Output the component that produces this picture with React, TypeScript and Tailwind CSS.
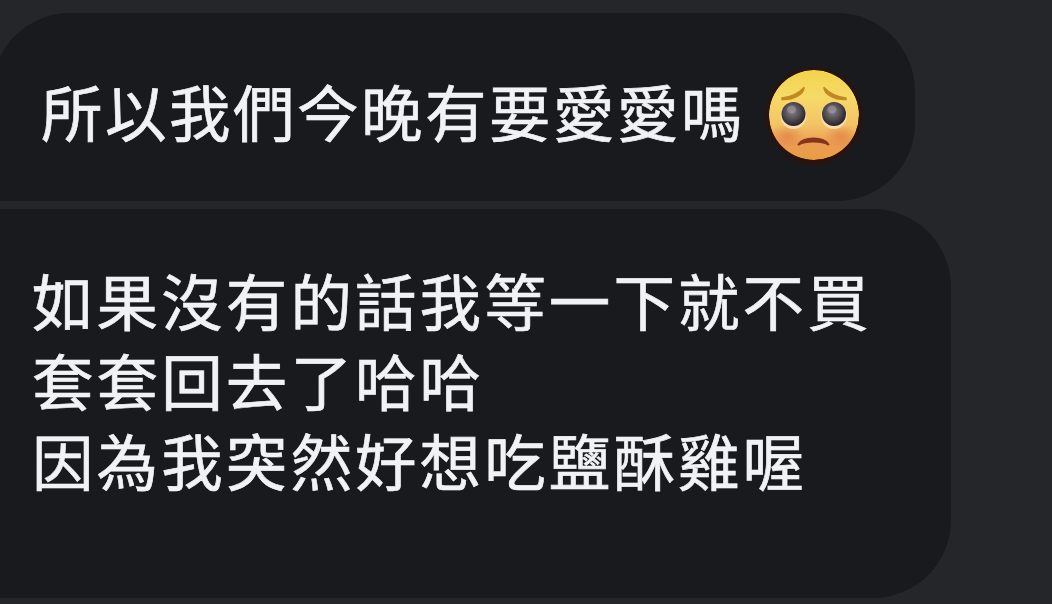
import React from "react";

const PleadingFace = () => {
  return (
    <svg viewBox="0 0 120 120" className="size-[120px] shrink-0" role="img" aria-label="pleading face">
      <defs>
        <linearGradient id="skin" x1="0" y1="0" x2="0" y2="1">
          <stop offset="0" stopColor="#f3d34a" />
          <stop offset="0.3" stopColor="#f6da68" />
          <stop offset="0.6" stopColor="#f3c465" />
          <stop offset="0.82" stopColor="#eb9c54" />
          <stop offset="1" stopColor="#e99e40" />
        </linearGradient>
        <radialGradient id="blush">
          <stop offset="0" stopColor="#e0773f" stopOpacity="0.6" />
          <stop offset="1" stopColor="#e0773f" stopOpacity="0" />
        </radialGradient>
        <radialGradient id="eye" cx="0.45" cy="0.4" r="0.6">
          <stop offset="0" stopColor="#85808a" />
          <stop offset="0.5" stopColor="#585359" />
          <stop offset="1" stopColor="#262127" />
        </radialGradient>
        <radialGradient id="halo">
          <stop offset="0.86" stopColor="#301006" />
          <stop offset="1" stopColor="#301006" stopOpacity="0" />
        </radialGradient>
        <clipPath id="face">
          <circle cx="60" cy="60" r="45" />
        </clipPath>
      </defs>

      <circle cx="60" cy="61" r="51" fill="url(#halo)" />
      <g clipPath="url(#face)">
        <circle cx="60" cy="60" r="45" fill="url(#skin)" />
        <ellipse cx="33" cy="81" rx="17" ry="12" fill="url(#blush)" />
        <ellipse cx="87" cy="81" rx="17" ry="12" fill="url(#blush)" />
      </g>

      {/* eyebrows */}
      <path d="M28 43 C37 42 45 38 50 32.5 C50 39 40 45 28 44.5Z" fill="#c08a20" stroke="#c08a20" strokeWidth="1.5" strokeLinejoin="round" />
      <path d="M92 43 C84 42 75 38 70 32.5 C70 39 80 45 92 44.5Z" fill="#c08a20" stroke="#c08a20" strokeWidth="1.5" strokeLinejoin="round" />

      {/* eyes */}
      <circle cx="39.5" cy="61" r="13" fill="#f7dcb0" />
      <circle cx="80" cy="61" r="13" fill="#f7dcb0" />
      <circle cx="39.5" cy="59" r="12" fill="url(#eye)" />
      <circle cx="80" cy="59" r="12" fill="url(#eye)" />
      <ellipse cx="37.5" cy="54.5" rx="4.5" ry="4" fill="#aaa4a6" opacity="0.5" />
      <ellipse cx="78" cy="54.5" rx="4.5" ry="4" fill="#aaa4a6" opacity="0.5" />

      {/* mouth */}
      <path d="M44.5 89.5 C49 81.5 70 81.5 74.5 89.5 C67 85.5 52 85.5 44.5 89.5Z" fill="#85351c" stroke="#85351c" strokeWidth="2" strokeLinejoin="round" />
    </svg>
  );
};

const LINES = ["如果沒有的話我等一下就不買", "套套回去了哈哈", "因為我突然好想吃鹽酥雞喔"];

export default function App() {
  return (
    <main className="flex h-[604px] w-[1052px] flex-col items-start gap-2 overflow-hidden bg-[#25262a] pt-[13px] font-['Noto_Sans_CJK_TC',sans-serif] text-[61.5px] text-[#f1f2f6] [-webkit-text-stroke:0.7px_#f1f2f6]">
      <div className="-ml-2 flex h-[188px] w-[923px] shrink-0 items-center rounded-r-[78px] rounded-tl-[78px] bg-[#191a1d] pl-[49px]">
        <p className="w-[713px] whitespace-nowrap pt-[7px] leading-[80px] tracking-[2.5px]">所以我們今晚有要愛愛嗎</p>
        <div className="-my-4 pt-[15px]">
          <PleadingFace />
        </div>
      </div>

      <div className="h-[389px] w-[951px] shrink-0 rounded-r-[78px] bg-[#191a1d] pl-[32px] pt-[51px]">
        {LINES.map((line) => (
          <p key={line} className="h-[80px] whitespace-nowrap leading-[80px] tracking-[3.1px]">{line}</p>
        ))}
      </div>
    </main>
  );
}
